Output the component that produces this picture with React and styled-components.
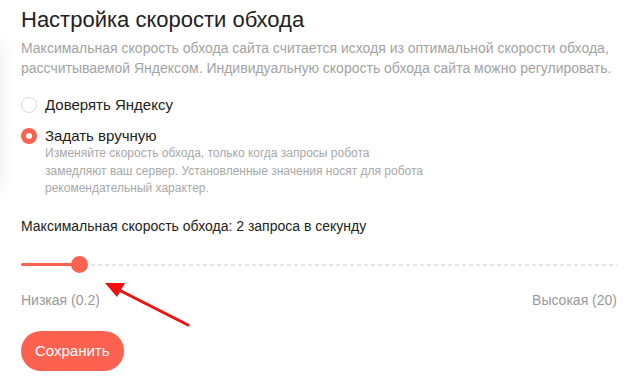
import styled, { createGlobalStyle } from 'styled-components'

const accent = '#fc624f'

const GlobalStyle = createGlobalStyle`
  body {
    margin: 0;
    background: #fff;
    font-family: 'Liberation Sans', Arial, sans-serif;
  }
`

const Page = styled.div`
  position: relative;
  width: 641px;
  height: 391px;
  overflow: hidden;
  padding: 6px 24px 0 21px;
  box-sizing: border-box;
`

const SideShadow = styled.div`
  position: absolute;
  left: -30px;
  top: 40px;
  width: 30px;
  height: 150px;
  box-shadow: 0 0 18px rgba(0, 0, 0, 0.08);
`

const Title = styled.h1`
  margin: 0;
  font-size: 22px;
  font-weight: normal;
  color: #222;
  line-height: 28px;
`

const Lead = styled.p`
  margin: 4px 0 0;
  font-size: 14px;
  line-height: 20px;
  color: #a3a3a3;
`

const Options = styled.div`
  display: flex;
  flex-direction: column;
  gap: 12px;
  margin-top: 17px;
`

const Option = styled.label`
  display: grid;
  grid-template-columns: 16px 1fr;
  column-gap: 8px;
  align-items: center;
`

const Radio = styled.span`
  width: 16px;
  height: 16px;
  border-radius: 50%;
  box-sizing: border-box;
  border: ${({ checked }) => (checked ? 'none' : '1px solid #dcdcdc')};
  background: ${({ checked }) => (checked ? accent : '#fff')};
  display: flex;
  align-items: center;
  justify-content: center;
  &::after {
    content: '';
    display: ${({ checked }) => (checked ? 'block' : 'none')};
    width: 6px;
    height: 6px;
    border-radius: 50%;
    background: #fff;
  }
`

const OptionLabel = styled.span`
  font-size: 15px;
  line-height: 19px;
  color: #222;
`

const Hint = styled.span`
  grid-column: 2;
  font-size: 12px;
  line-height: 17.5px;
  color: #a8a8a8;
  max-width: 385px;
`

const SpeedLabel = styled.div`
  margin-top: 19px;
  font-size: 14px;
  line-height: 18px;
  color: #222;
`

const Slider = styled.div`
  display: flex;
  align-items: center;
  height: 20px;
  margin-top: 20px;
`

const Filled = styled.div`
  width: 58px;
  height: 3px;
  background: ${accent};
  border-radius: 2px;
`

const Thumb = styled.div`
  width: 17px;
  height: 17px;
  margin-left: -8px;
  border-radius: 50%;
  background: ${accent};
  flex-shrink: 0;
`

const Track = styled.div`
  flex: 1;
  margin-left: 3px;
  height: 2px;
  background: repeating-linear-gradient(
    to right,
    #e1e4ea 0 4px,
    transparent 4px 7px
  );
`

const Scale = styled.div`
  display: flex;
  justify-content: space-between;
  margin-top: 16px;
  font-size: 14px;
  line-height: 18px;
  color: #999;
`

const SaveButton = styled.button`
  margin-top: 22px;
  height: 40px;
  padding: 0 14px;
  border: none;
  border-radius: 20px;
  background: ${accent};
  color: #fff;
  font-family: inherit;
  font-size: 15px;
  cursor: pointer;
`

const Arrow = styled.svg`
  position: absolute;
  left: 95px;
  top: 275px;
`

export default function App() {
  return (
    <>
      <GlobalStyle />
      <Page>
        <SideShadow />
        <Title>Настройка скорости обхода</Title>
        <Lead>
          Максимальная скорость обхода сайта считается исходя из оптимальной
          скорости обхода, рассчитываемой Яндексом. Индивидуальную скорость
          обхода сайта можно регулировать.
        </Lead>
        <Options>
          <Option>
            <Radio />
            <OptionLabel>Доверять Яндексу</OptionLabel>
          </Option>
          <Option>
            <Radio checked />
            <OptionLabel>Задать вручную</OptionLabel>
            <Hint>
              Изменяйте скорость обхода, только когда запросы робота
              замедляют ваш сервер. Установленные значения носят для робота
              рекомендательный характер.
            </Hint>
          </Option>
        </Options>
        <SpeedLabel>Максимальная скорость обхода: 2 запроса в секунду</SpeedLabel>
        <Slider>
          <Filled />
          <Thumb />
          <Track />
        </Slider>
        <Scale>
          <span>Низкая (0.2)</span>
          <span>Высокая (20)</span>
        </Scale>
        <SaveButton>Сохранить</SaveButton>
        <Arrow width="100" height="55" viewBox="0 0 100 55">
          <line x1="93" y1="50" x2="22" y2="14" stroke="#f01010" strokeWidth="3" strokeLinecap="round" />
          <polygon points="10,8 30,8 22,22" fill="#f01010" />
        </Arrow>
      </Page>
    </>
  )
}
